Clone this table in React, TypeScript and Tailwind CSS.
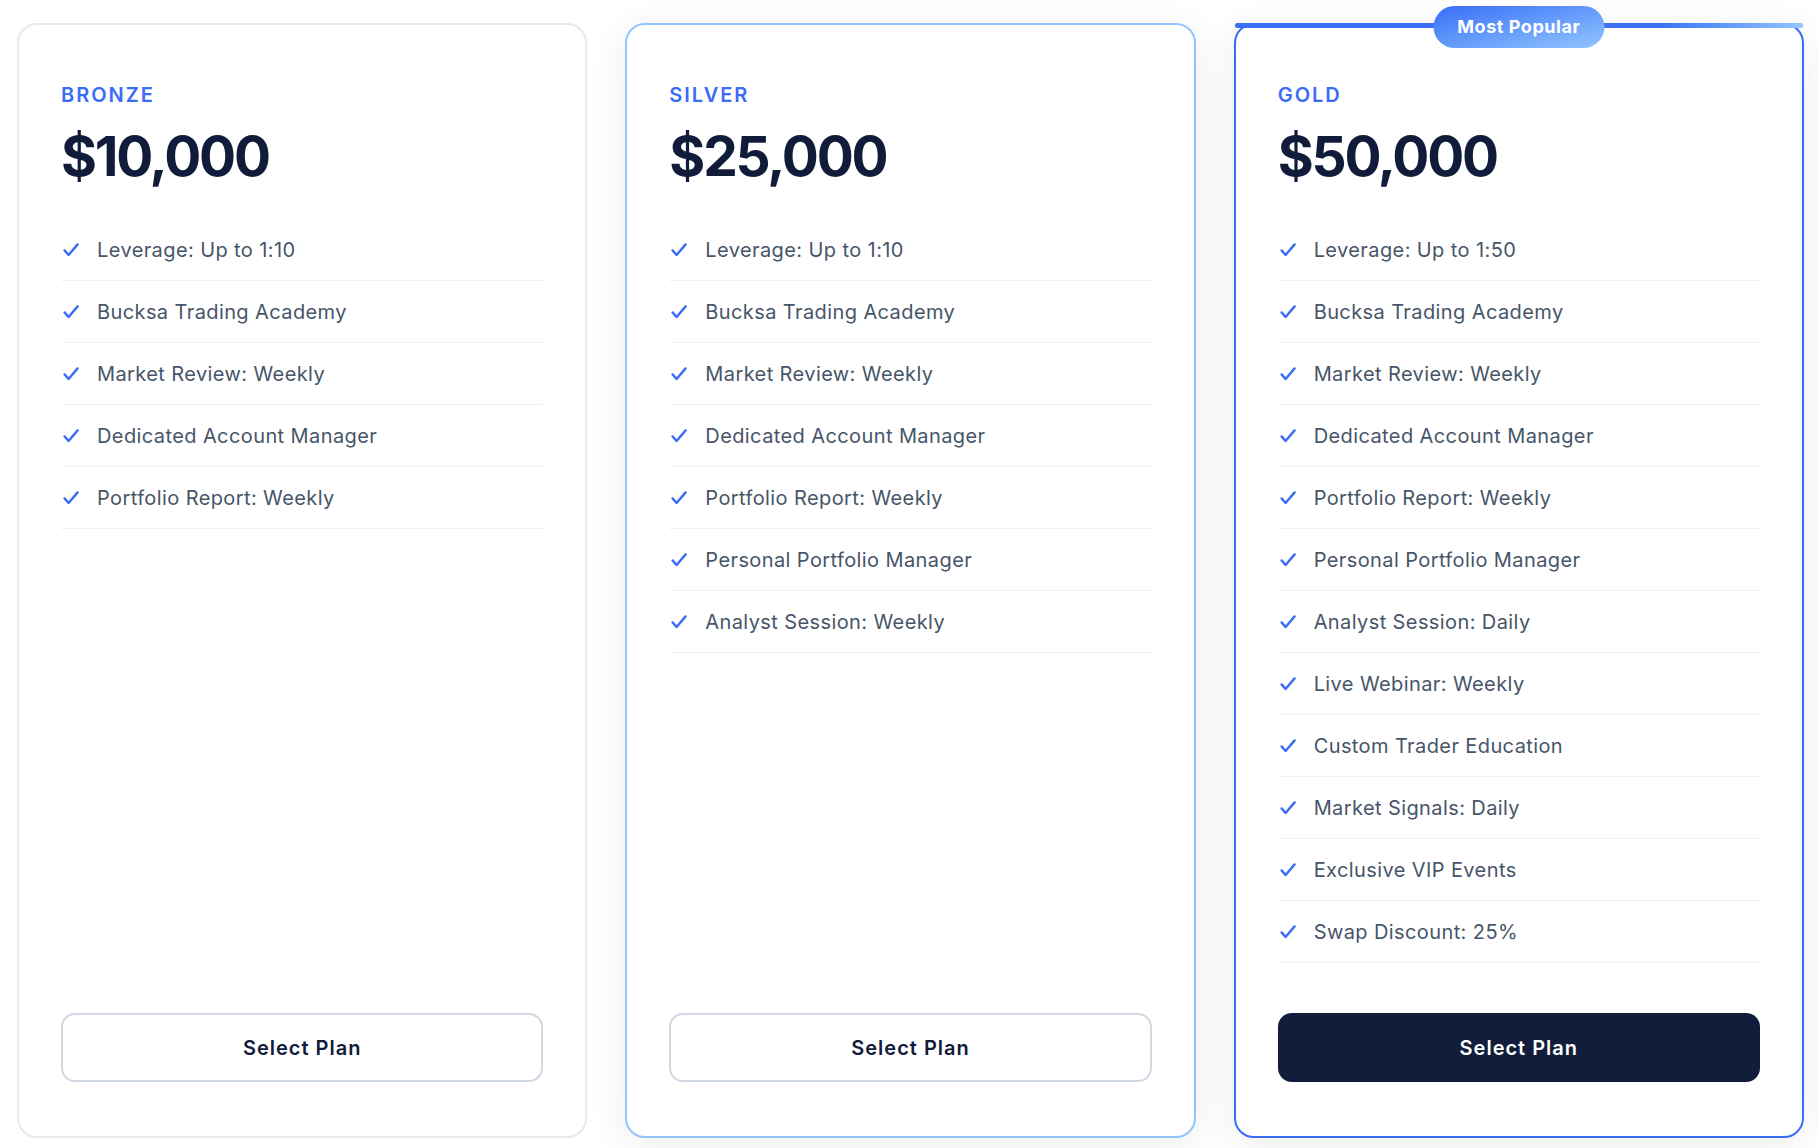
import React from "react";

type Plan = {
  name: string;
  price: string;
  features: string[];
  variant: "plain" | "silver" | "gold";
};

const common = [
  "Bucksa Trading Academy",
  "Market Review: Weekly",
  "Dedicated Account Manager",
  "Portfolio Report: Weekly",
];

const plans: Plan[] = [
  {
    name: "BRONZE",
    price: "$10,000",
    variant: "plain",
    features: ["Leverage: Up to 1:10", ...common],
  },
  {
    name: "SILVER",
    price: "$25,000",
    variant: "silver",
    features: [
      "Leverage: Up to 1:10",
      ...common,
      "Personal Portfolio Manager",
      "Analyst Session: Weekly",
    ],
  },
  {
    name: "GOLD",
    price: "$50,000",
    variant: "gold",
    features: [
      "Leverage: Up to 1:50",
      ...common,
      "Personal Portfolio Manager",
      "Analyst Session: Daily",
      "Live Webinar: Weekly",
      "Custom Trader Education",
      "Market Signals: Daily",
      "Exclusive VIP Events",
      "Swap Discount: 25%",
    ],
  },
];

function CheckMark() {
  return (
    <svg
      width="16"
      height="14"
      viewBox="0 0 16 14"
      fill="none"
      className="shrink-0"
    >
      <path
        d="M1.6 7.4 L5.6 12 L14.6 1.4"
        stroke="#3b6cf6"
        strokeWidth="2.4"
        strokeLinecap="round"
        strokeLinejoin="round"
      />
    </svg>
  );
}

function Card({ plan }: { plan: Plan }) {
  const border =
    plan.variant === "gold"
      ? "border-[#3b6cf6] shadow-[0_8px_40px_rgba(15,23,42,0.08)]"
      : plan.variant === "silver"
      ? "border-[#93c5fd] shadow-[0_8px_40px_rgba(15,23,42,0.08)]"
      : "border-[#e5e9f0]";
  return (
    <div
      className={`relative flex flex-col rounded-[20px] border-2 bg-white pt-[56px] px-[42px] pb-[54px] ${border}`}
    >
      {plan.variant === "gold" && (
        <>
          <div className="absolute -top-[2px] -left-[1px] -right-[1px] h-[5px] rounded-full bg-gradient-to-r from-[#3b6cf6] via-[#3f70f6] via-75% to-[#93c5fd]" />
          <div className="absolute left-1/2 -top-[19px] -translate-x-1/2 rounded-full bg-gradient-to-br from-[#3b6cf6] to-[#93c5fd] px-6 py-[7px] text-[18px] font-bold leading-7 tracking-[0.03em] text-white whitespace-nowrap">
            Most Popular
          </div>
        </>
      )}
      <div className="text-xl font-semibold leading-7 tracking-[0.1em] text-[#3b6cf6]">
        {plan.name}
      </div>
      <div className="mt-[20px] text-[55px] font-bold leading-none tracking-[-0.04em] text-[#111c3a]">
        {plan.price}
      </div>
      <ul className="mt-[35px] flex-1">
        {plan.features.map((f) => (
          <li
            key={f}
            className="flex items-center gap-[18px] border-b border-[#eef2f7] pt-[17px] pb-[16px] pl-[2px] text-[20px] leading-7 tracking-[0.02em] text-[#475569]"
          >
            <CheckMark />
            <span>{f}</span>
          </li>
        ))}
      </ul>
      <button
        className={`mt-[50px] h-[69px] w-full rounded-[14px] text-[20px] font-semibold tracking-[0.05em] ${
          plan.variant === "gold"
            ? "bg-[#111d3a] text-white"
            : "border-2 border-[#cfd8e4] bg-white text-[#111c3a]"
        }`}
      >
        Select Plan
      </button>
    </div>
  );
}

export default function App() {
  return (
    <div
      className="min-h-[1148px] w-full bg-white"
      style={{ fontFamily: "Inter, 'Noto Sans', sans-serif" }}
    >
      <div className="grid grid-cols-3 items-stretch gap-[38px] pl-[17px] pr-[14px] pt-[23px]">
        {plans.map((p) => (
          <Card key={p.name} plan={p} />
        ))}
      </div>
    </div>
  );
}
